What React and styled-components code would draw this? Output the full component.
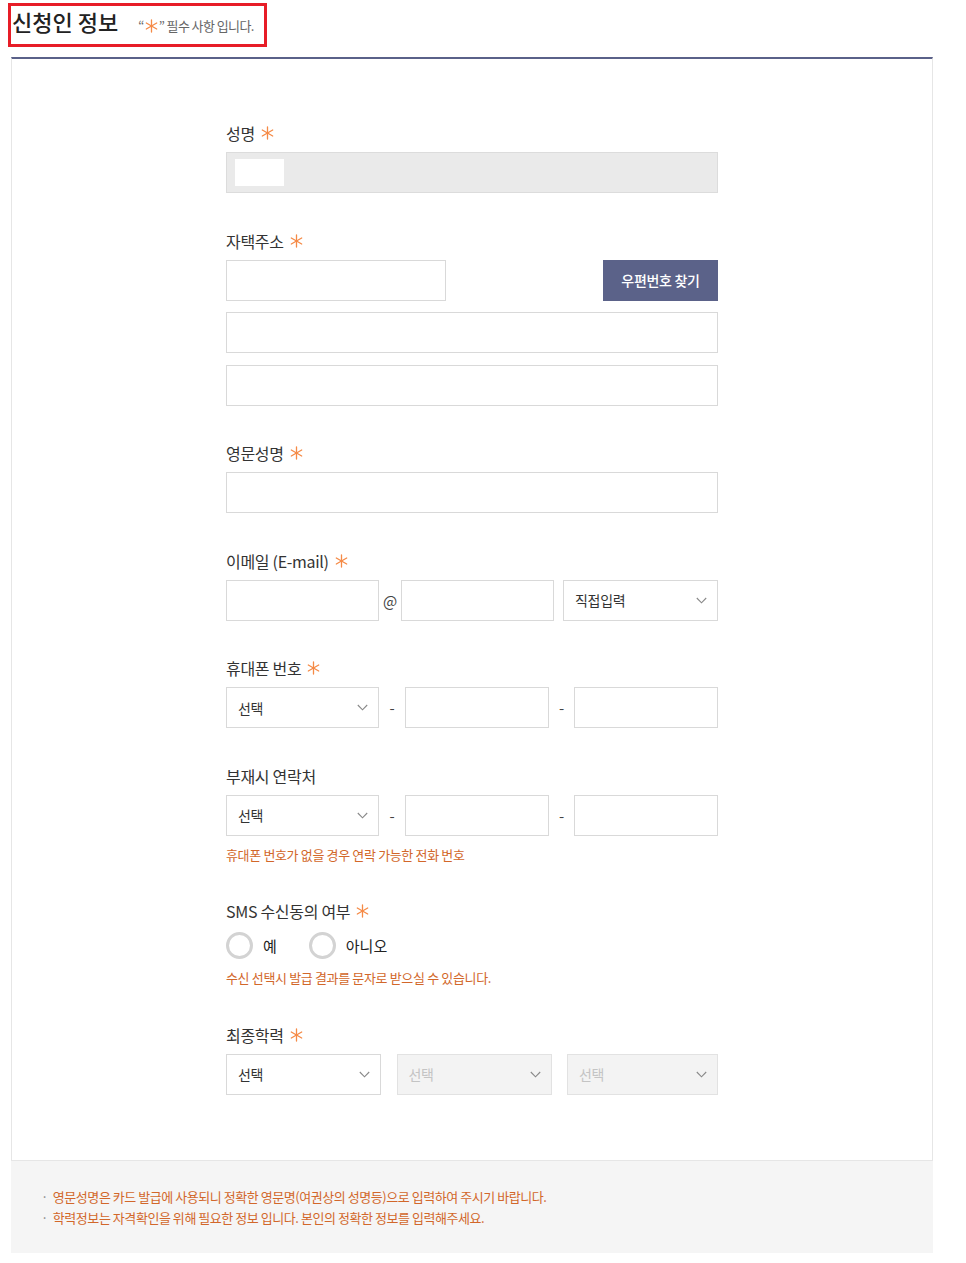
import styled, { createGlobalStyle } from "styled-components";

const GlobalStyle = createGlobalStyle`
  body {
    margin: 0;
    background: #fff;
    font-family: "Noto Sans CJK KR", "Noto Sans", sans-serif;
    color: #333;
  }
  * { box-sizing: border-box; }
`;

const Page = styled.div`
  width: 966px;
  padding-top: 3px;
`;

const Header = styled.div`
  display: flex;
  align-items: baseline;
  width: 259px;
  height: 44px;
  margin-left: 8px;
  padding: 0 0 0 1px;
  border: 3px solid #e71d27;
`;
const Title = styled.h2`
  margin: 0;
  font-size: 22px;
  font-weight: 500;
  color: #222;
  line-height: 30px;
`;
const SubTitle = styled.span`
  margin-left: 20px;
  font-size: 13px;
  color: #666;
  letter-spacing: -0.6px;
`;

const Box = styled.section`
  width: 922px;
  margin: 10px 0 0 11px;
  border: 1px solid #e6e6e6;
  border-top: 2px solid #5a6189;
  padding: 64px 0 65px;
`;
const Column = styled.div`
  width: 492px;
  margin: 0 auto;
`;
const Field = styled.div`
  margin-top: ${(p) => (p.first ? "0" : p.afterHint ? "36.5px" : "37.5px")};
`;
const Label = styled.div`
  display: flex;
  align-items: center;
  gap: 6px;
  height: 20px;
  margin-bottom: 9px;
  font-size: 16px;
  color: #333;
  letter-spacing: -0.3px;
`;
const Star = () => (
  <svg width="13" height="14" viewBox="0 0 13 14">
    <g stroke="#f58a46" strokeWidth="1.3" strokeLinecap="round">
      <line x1="6.5" y1="1" x2="6.5" y2="13" />
      <line x1="1.3" y1="4" x2="11.7" y2="10" />
      <line x1="1.3" y1="10" x2="11.7" y2="4" />
    </g>
  </svg>
);
const InlineStar = styled.span`
  display: inline-block;
  vertical-align: -2px;
  margin: 0 1px;
`;

const Input = styled.input`
  display: block;
  width: ${(p) => p.w || "100%"};
  height: 41px;
  margin: 0;
  padding: 0 10px;
  border: 1px solid #d9d9d9;
  border-radius: 0;
  background: #fff;
  font: inherit;
  outline: none;
`;
const ReadOnly = styled.div`
  display: flex;
  align-items: center;
  height: 41px;
  padding-left: 8px;
  border: 1px solid #dcdcdc;
  background: #eaeaea;
`;
const Masked = styled.span`
  width: 49px;
  height: 27px;
  background: #fff;
`;
const Stack = styled.div`
  display: flex;
  flex-direction: column;
  gap: 11.5px;
`;
const Row = styled.div`
  display: flex;
  align-items: center;
  justify-content: space-between;
`;
const Button = styled.button`
  width: 115px;
  height: 41px;
  border: 0;
  background: #5b6289;
  color: #fff;
  font-family: inherit;
  font-size: 14px;
  font-weight: 500;
  letter-spacing: -0.3px;
`;
const EmailRow = styled.div`
  display: grid;
  grid-template-columns: 153px 22px 153px 164px;
  align-items: center;
  & > :last-child {
    margin-left: 9px;
  }
`;
const PhoneRow = styled.div`
  display: grid;
  grid-template-columns: 153px 26px 1fr 25px 1fr;
  align-items: center;
`;
const EduRow = styled.div`
  display: grid;
  grid-template-columns: 155px 155px 151px;
  justify-content: space-between;
`;
const Sep = styled.span`
  text-align: center;
  font-size: 15px;
  color: #444;
`;
const SelectBox = styled.div`
  display: flex;
  align-items: center;
  justify-content: space-between;
  height: 41px;
  padding: 0 10px 0 11px;
  border: 1px solid ${(p) => (p.disabled ? "#e2e2e2" : "#d9d9d9")};
  background: ${(p) => (p.disabled ? "#f3f3f3" : "#fff")};
  color: ${(p) => (p.disabled ? "#c4c4c4" : "#333")};
  font-size: 14px;
  letter-spacing: -0.3px;
`;
const Chevron = () => (
  <svg width="11" height="7" viewBox="0 0 11 7">
    <path d="M0.8 1 L5.5 5.8 L10.2 1" fill="none" stroke="#888" strokeWidth="1.1" />
  </svg>
);
const Select = ({ children, disabled }) => (
  <SelectBox disabled={disabled}>
    <span>{children}</span>
    <Chevron />
  </SelectBox>
);

const Hint = styled.p`
  margin: 9px 0 0;
  font-size: 13px;
  line-height: 20px;
  color: #d2672a;
  letter-spacing: -0.35px;
`;
const Radios = styled.div`
  display: flex;
  align-items: center;
  gap: 32px;
  margin-top: 11px;
`;
const RadioItem = styled.label`
  display: flex;
  align-items: center;
  gap: 10px;
  font-size: 15px;
  color: #222;
`;
const Circle = styled.span`
  width: 27px;
  height: 27px;
  border: 3px solid #d3d3d3;
  border-radius: 50%;
  background: #fff;
`;

const Notes = styled.ul`
  width: 922px;
  margin: 0 0 0 11px;
  padding: 25px 0 25px 30px;
  list-style: none;
  background: #f5f5f5;
`;
const Note = styled.li`
  font-size: 13px;
  line-height: 21px;
  color: #d2672a;
  letter-spacing: -0.45px;
  &::before {
    content: "·";
    color: #888;
    margin-right: 5px;
  }
`;

const App = () => {
  return (
    <Page>
      <GlobalStyle />
      <Header>
        <Title>신청인 정보</Title>
        <SubTitle>
          “<InlineStar><Star /></InlineStar>” 필수 사항 입니다.
        </SubTitle>
      </Header>
      <Box>
        <Column>
          <Field first>
            <Label>성명 <Star /></Label>
            <ReadOnly><Masked /></ReadOnly>
          </Field>
          <Field>
            <Label>자택주소 <Star /></Label>
            <Stack>
              <Row>
                <Input w="220px" />
                <Button>우편번호 찾기</Button>
              </Row>
              <Input />
              <Input />
            </Stack>
          </Field>
          <Field>
            <Label>영문성명 <Star /></Label>
            <Input />
          </Field>
          <Field>
            <Label>이메일 (E-mail) <Star /></Label>
            <EmailRow>
              <Input />
              <Sep>@</Sep>
              <Input />
              <Select>직접입력</Select>
            </EmailRow>
          </Field>
          <Field>
            <Label>휴대폰 번호 <Star /></Label>
            <PhoneRow>
              <Select>선택</Select>
              <Sep>-</Sep>
              <Input />
              <Sep>-</Sep>
              <Input />
            </PhoneRow>
          </Field>
          <Field>
            <Label>부재시 연락처</Label>
            <PhoneRow>
              <Select>선택</Select>
              <Sep>-</Sep>
              <Input />
              <Sep>-</Sep>
              <Input />
            </PhoneRow>
            <Hint>휴대폰 번호가 없을 경우 연락 가능한 전화 번호</Hint>
          </Field>
          <Field afterHint>
            <Label>SMS 수신동의 여부 <Star /></Label>
            <Radios>
              <RadioItem><Circle />예</RadioItem>
              <RadioItem><Circle />아니오</RadioItem>
            </Radios>
            <Hint>수신 선택시 발급 결과를 문자로 받으실 수 있습니다.</Hint>
          </Field>
          <Field afterHint>
            <Label>최종학력 <Star /></Label>
            <EduRow>
              <Select>선택</Select>
              <Select disabled>선택</Select>
              <Select disabled>선택</Select>
            </EduRow>
          </Field>
        </Column>
      </Box>
      <Notes>
        <Note>영문성명은 카드 발급에 사용되니 정확한 영문명(여권상의 성명등)으로 입력하여 주시기 바랍니다.</Note>
        <Note>학력정보는 자격확인을 위해 필요한 정보 입니다. 본인의 정확한 정보를 입력해주세요.</Note>
      </Notes>
    </Page>
  );
};

export default App;
